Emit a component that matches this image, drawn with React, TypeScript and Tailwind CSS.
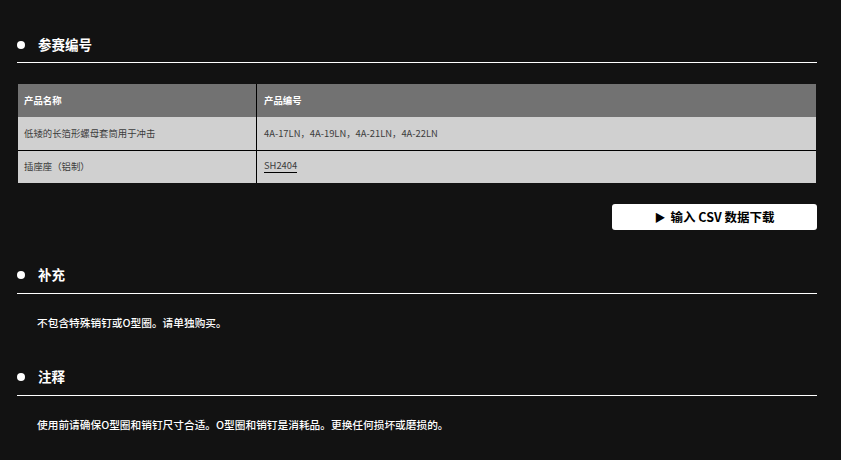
import React from "react";

const font = { fontFamily: '"Noto Sans CJK SC", "Noto Sans", sans-serif' };

function Heading({ title, className }: { title: string; className?: string }) {
  return (
    <div className={"border-b border-white " + (className ?? "")}>
      <div className="flex h-[20px] items-center">
        <span className="h-[8px] w-[8px] rounded-full bg-white" />
        <span className="ml-[13px] text-[13.5px] font-bold leading-none text-white">{title}</span>
      </div>
    </div>
  );
}

export default function App() {
  return (
    <div className="min-h-[460px] w-[841px] bg-[#121212]" style={font}>
      <div className="ml-[17px] w-[800px] pt-[35px]">
        <Heading title="参赛编号" className="pb-[7px]" />

        <div className="mx-[1px] mt-[21px] text-[9.4px] leading-none">
          <div className="flex h-[33px] bg-[#727272] font-bold text-white">
            <div className="flex w-[239px] items-center border-r border-black pl-[6px]">产品名称</div>
            <div className="flex flex-1 items-center pl-[7px]">产品编号</div>
          </div>
          <div className="flex h-[34px] border-b border-black bg-[#d0d0d0] text-[#3c3c3c]">
            <div className="flex w-[239px] items-center border-r border-black pl-[6px]">低矮的长箔形螺母套筒用于冲击</div>
            <div className="flex flex-1 items-center pl-[7px]">4A-17LN，4A-19LN，4A-21LN，4A-22LN</div>
          </div>
          <div className="flex h-[32px] bg-[#d0d0d0] text-[#3c3c3c]">
            <div className="flex w-[239px] items-center border-r border-black pl-[6px]">插座座（铝制）</div>
            <div className="flex flex-1 items-center pl-[7px]">
              <span className="border-b border-black pb-[2px]">SH2404</span>
            </div>
          </div>
        </div>

        <div className="mt-[21px] flex justify-end">
          <div className="flex h-[26px] w-[205px] items-center justify-center rounded-[3px] bg-white text-[12.5px] font-bold text-black">
            <span className="mr-[5px] text-[11px]">▶</span>
            <span>输入 CSV 数据下载</span>
          </div>
        </div>

        <Heading title="补充" className="mt-[35px] pb-[8px]" />
        <p className="mt-[21px] pl-[20px] text-[10.7px] font-medium leading-[16px] text-white">不包含特殊销钉或O型圈。请单独购买。</p>

        <Heading title="注释" className="mt-[36px] pb-[8px]" />
        <p className="mt-[21px] pl-[20px] text-[10.7px] font-medium leading-[16px] text-white">
          使用前请确保O型圈和销钉尺寸合适。O型圈和销钉是消耗品。更换任何损坏或磨损的。
        </p>
      </div>
    </div>
  );
}
